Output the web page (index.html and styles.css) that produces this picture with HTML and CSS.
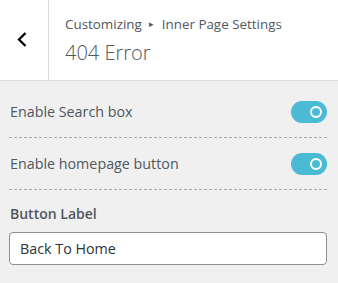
FILE: index.html
```html
<!DOCTYPE html>
<html lang="en">
<head>
    <meta charset="UTF-8">
    <meta name="viewport" content="width=device-width, initial-scale=1.0">
    <title>404 Error</title>
    <link rel="stylesheet" href="styles.css">
</head>
<body>
    <header class="panel-head">
        <button class="back" aria-label="Back">
            <svg width="10" height="15" viewBox="0 0 10 15"><path d="M8.5 1 L2 7.5 L8.5 14" fill="none" stroke="#000" stroke-width="2.3"/></svg>
        </button>
        <div class="titles">
            <div class="crumb">Customizing <span class="arrow">&#9656;</span> Inner Page Settings</div>
            <h1>404 Error</h1>
        </div>
    </header>
    <section class="controls">
        <div class="row">
            <span class="label">Enable Search box</span>
            <span class="toggle"></span>
        </div>
        <div class="row">
            <span class="label">Enable homepage button</span>
            <span class="toggle"></span>
        </div>
        <div class="field">
            <label class="field-label" for="btnLabel">Button Label</label>
            <input id="btnLabel" type="text" value="Back To Home">
        </div>
    </section>
</body>
</html>
```
FILE: styles.css
```css
body {
    margin: 0;
    font-family: "Open Sans", "Noto Sans", sans-serif;
    background-color: #f0f0f1;
    color: #50575e;
}
.panel-head {
    display: flex;
    height: 81px;
    background-color: #fff;
    border-bottom: 1px solid #dcdcde;
    box-sizing: border-box;
}
.back {
    width: 49px;
    padding: 0 5px 2px 0;
    border: none;
    border-right: 1px solid #dcdcde;
    background: #fff;
    display: flex;
    align-items: center;
    justify-content: center;
}
.titles {
    padding: 14px 0 0 16px;
}
.crumb {
    font-size: 13.4px;
    line-height: 20px;
}
.arrow {
    font-size: 9px;
    vertical-align: 2px;
    margin: 0 4px;
}
h1 {
    margin: 5px 0 0;
    font-size: 20px;
    font-weight: 300;
    line-height: 28px;
}
.controls {
    padding: 0 11px 0 9px;
}
.row {
    display: flex;
    align-items: center;
    justify-content: space-between;
    height: 51px;
    border-bottom: 1px dashed #a7aaad;
    padding-left: 1px;
}
.row:first-child {
    padding-top: 5px;
}
.label {
    font-size: 14.3px;
}
.toggle {
    position: relative;
    width: 36px;
    height: 22px;
    border-radius: 11px;
    background-color: #4bbad4;
}
.toggle::after {
    content: "";
    position: absolute;
    right: 5px;
    top: 5px;
    width: 8px;
    height: 8px;
    border: 2px solid #fff;
    border-radius: 50%;
}
.field {
    padding-top: 14px;
}
.field-label {
    display: block;
    font-size: 14px;
    font-weight: 600;
    line-height: 20px;
    padding-left: 1px;
    margin-bottom: 8px;
}
input {
    display: block;
    width: 100%;
    box-sizing: border-box;
    height: 33px;
    padding: 0 10px;
    border: 1px solid #8c8f94;
    border-radius: 4px;
    font-family: inherit;
    font-size: 14.3px;
    color: #2c3338;
    background: #fff;
}
```
